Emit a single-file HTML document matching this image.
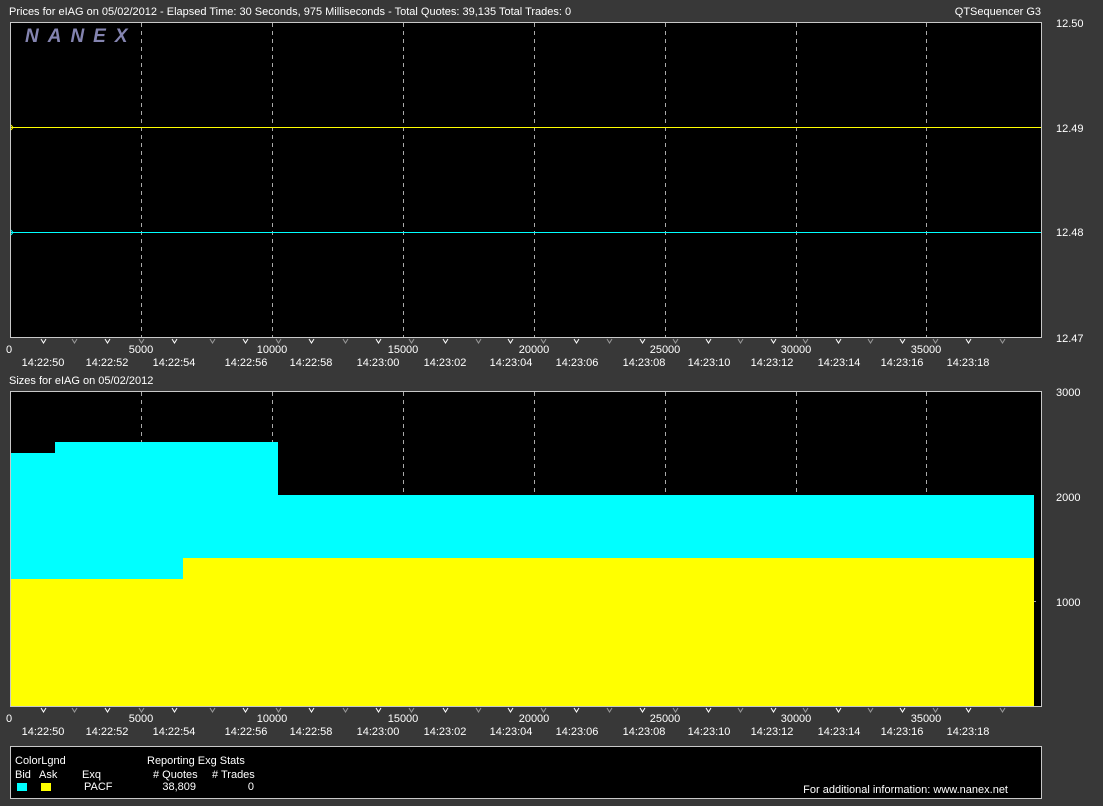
<!DOCTYPE html>
<html><head><meta charset="utf-8"><style>
html,body{margin:0;padding:0;background:#383838;}
svg{display:block}
text{font-family:"Liberation Sans",Arial,sans-serif;font-size:11px;fill:#fff}
</style></head><body>
<svg width="1103" height="806" viewBox="0 0 1103 806" xmlns="http://www.w3.org/2000/svg">
<rect width="1103" height="806" fill="#383838"/>
<text x="9" y="15">Prices for  eIAG  on  05/02/2012  -  Elapsed Time: 30 Seconds, 975 Milliseconds  -  Total Quotes: 39,135  Total Trades: 0</text>
<text x="1041" y="15" text-anchor="end">QTSequencer G3</text>
<!-- top chart -->
<rect x="10.5" y="22.5" width="1031" height="315" fill="#000" stroke="#c8c8c8"/>
<g stroke="#aaa" stroke-dasharray="4,4">
<line x1="141.5" y1="23" x2="141.5" y2="337"/><line x1="272.5" y1="23" x2="272.5" y2="337"/><line x1="403.5" y1="23" x2="403.5" y2="337"/><line x1="534.5" y1="23" x2="534.5" y2="337"/><line x1="665.5" y1="23" x2="665.5" y2="337"/><line x1="796.5" y1="23" x2="796.5" y2="337"/><line x1="926.5" y1="23" x2="926.5" y2="337"/>
</g>
<text x="25" y="42" style="font-size:19px;font-weight:bold;font-style:italic;fill:#8484b0;letter-spacing:9px">NANEX</text>
<line x1="11" y1="127.5" x2="1041" y2="127.5" stroke="#ffff00"/>
<line x1="11" y1="232.5" x2="1041" y2="232.5" stroke="#00ffff"/>
<path d="M11 125 l2 2.5 -2 2.5" fill="none" stroke="#ffff00"/>
<path d="M11 230 l2 2.5 -2 2.5" fill="none" stroke="#00ffff"/>
<text x="1056" y="27">12.50</text><text x="1056" y="132">12.49</text><text x="1056" y="236">12.48</text><text x="1056" y="342">12.47</text>
<!-- ticks top -->
<g id="ticks" fill="none" stroke-width="1">
<path d="M41 339l2.5 4 2.5-4" stroke="#fff"/><path d="M72 339l2.5 4 2.5-4" stroke="#999"/><path d="M105 339l2.5 4 2.5-4" stroke="#fff"/><path d="M139 339l2.5 4 2.5-4" stroke="#999"/><path d="M172 339l2.5 4 2.5-4" stroke="#fff"/><path d="M210 339l2.5 4 2.5-4" stroke="#999"/><path d="M243 339l2.5 4 2.5-4" stroke="#fff"/><path d="M276 339l2.5 4 2.5-4" stroke="#999"/><path d="M309 339l2.5 4 2.5-4" stroke="#fff"/><path d="M343 339l2.5 4 2.5-4" stroke="#999"/><path d="M376 339l2.5 4 2.5-4" stroke="#fff"/><path d="M409 339l2.5 4 2.5-4" stroke="#999"/><path d="M443 339l2.5 4 2.5-4" stroke="#fff"/><path d="M476 339l2.5 4 2.5-4" stroke="#999"/><path d="M508 339l2.5 4 2.5-4" stroke="#fff"/><path d="M541 339l2.5 4 2.5-4" stroke="#999"/><path d="M574 339l2.5 4 2.5-4" stroke="#fff"/><path d="M607 339l2.5 4 2.5-4" stroke="#999"/><path d="M640 339l2.5 4 2.5-4" stroke="#fff"/><path d="M673 339l2.5 4 2.5-4" stroke="#999"/><path d="M706 339l2.5 4 2.5-4" stroke="#fff"/><path d="M738 339l2.5 4 2.5-4" stroke="#999"/><path d="M771 339l2.5 4 2.5-4" stroke="#fff"/><path d="M803 339l2.5 4 2.5-4" stroke="#999"/><path d="M836 339l2.5 4 2.5-4" stroke="#fff"/><path d="M868 339l2.5 4 2.5-4" stroke="#999"/><path d="M900 339l2.5 4 2.5-4" stroke="#fff"/><path d="M933 339l2.5 4 2.5-4" stroke="#999"/><path d="M966 339l2.5 4 2.5-4" stroke="#fff"/><path d="M1000 339l2.5 4 2.5-4" stroke="#999"/>
</g>
<g id="labels" style="font-size:10px">
<text x="9" y="353" text-anchor="middle">0</text><text x="141" y="353" text-anchor="middle">5000</text><text x="272" y="353" text-anchor="middle">10000</text><text x="403" y="353" text-anchor="middle">15000</text><text x="534" y="353" text-anchor="middle">20000</text><text x="665" y="353" text-anchor="middle">25000</text><text x="796" y="353" text-anchor="middle">30000</text><text x="926" y="353" text-anchor="middle">35000</text>
<text x="43" y="366" text-anchor="middle">14:22:50</text><text x="107" y="366" text-anchor="middle">14:22:52</text><text x="174" y="366" text-anchor="middle">14:22:54</text><text x="246" y="366" text-anchor="middle">14:22:56</text><text x="311" y="366" text-anchor="middle">14:22:58</text><text x="378" y="366" text-anchor="middle">14:23:00</text><text x="445" y="366" text-anchor="middle">14:23:02</text><text x="511" y="366" text-anchor="middle">14:23:04</text><text x="577" y="366" text-anchor="middle">14:23:06</text><text x="644" y="366" text-anchor="middle">14:23:08</text><text x="709" y="366" text-anchor="middle">14:23:10</text><text x="772" y="366" text-anchor="middle">14:23:12</text><text x="839" y="366" text-anchor="middle">14:23:14</text><text x="902" y="366" text-anchor="middle">14:23:16</text><text x="968" y="366" text-anchor="middle">14:23:18</text>
</g>
<text x="9" y="384">Sizes for  eIAG  on  05/02/2012</text>
<!-- bottom chart -->
<rect x="10.5" y="391.5" width="1031" height="315" fill="#000" stroke="#c8c8c8"/>
<g stroke="#aaa" stroke-dasharray="4,4">
<line x1="141.5" y1="392" x2="141.5" y2="706"/><line x1="272.5" y1="392" x2="272.5" y2="706"/><line x1="403.5" y1="392" x2="403.5" y2="706"/><line x1="534.5" y1="392" x2="534.5" y2="706"/><line x1="665.5" y1="392" x2="665.5" y2="706"/><line x1="796.5" y1="392" x2="796.5" y2="706"/><line x1="926.5" y1="392" x2="926.5" y2="706"/>
</g>
<path d="M11 453H55V442H278V495H1034V706H11Z" fill="#00ffff"/>
<path d="M11 579H183V558H1034V706H11Z" fill="#ffff00"/>
<line x1="1034" y1="601.5" x2="1036" y2="601.5" stroke="#aaa"/>
<text x="1056" y="396">3000</text><text x="1056" y="501">2000</text><text x="1056" y="606">1000</text>
<use href="#ticks" y="369"/>
<use href="#labels" y="369"/>
<!-- legend -->
<rect x="10.5" y="746.5" width="1031" height="52" fill="#000" stroke="#c8c8c8"/>
<text x="15" y="764">ColorLgnd</text>
<text x="15" y="778">Bid</text><text x="39" y="778">Ask</text><text x="82" y="778">Exq</text>
<rect x="17" y="783" width="10" height="8" fill="#00ffff"/><rect x="41" y="783" width="10" height="8" fill="#ffff00"/>
<text x="84" y="790">PACF</text>
<text x="147" y="764">Reporting Exg Stats</text>
<text x="153" y="778"># Quotes</text><text x="212" y="778"># Trades</text>
<text x="196" y="790" text-anchor="end">38,809</text><text x="254" y="790" text-anchor="end">0</text>
<text x="1008" y="793" text-anchor="end">For additional information: www.nanex.net</text>
</svg>
</body></html>
